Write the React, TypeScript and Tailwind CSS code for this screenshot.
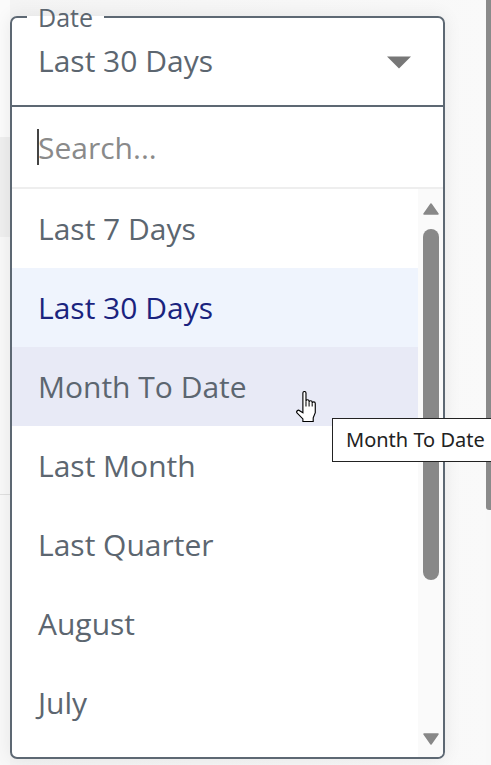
import { FC } from 'react'

const options = ['Last 7 Days', 'Last 30 Days', 'Month To Date', 'Last Month', 'Last Quarter', 'August', 'July']

const Triangle: FC<{ up?: boolean }> = ({ up }) => (
  <svg width="16" height="12" viewBox="0 0 16 12">
    <path
      d={up ? 'M8 1 L15 11 H1 Z' : 'M1 1 H15 L8 11 Z'}
      fill="#888"
      stroke="#888"
      strokeWidth="1.5"
      strokeLinejoin="round"
    />
  </svg>
)

const HandCursor: FC = () => (
  <svg width="23" height="32" viewBox="0 0 22 31" className="absolute left-[295px] top-[391px]">
    <path
      d="M7.5 21 V2 a1.5 1.5 0 0 1 3 0 V10 a1.5 1.5 0 0 1 3 0 V11 a1.5 1.5 0 0 1 3 0 V12 a1.5 1.5 0 0 1 3 0 V21 L17.5 26 V29.5 H7.5 V27 L2 21.5 a1.6 1.6 0 0 1 2.4 -2.3 L7.5 21 Z"
      fill="#fff"
      stroke="#000"
      strokeWidth="1.1"
    />
    <path d="M10.5 10 V15 M13.5 11 V15 M16.5 12 V15" stroke="#000" strokeWidth="1" />
  </svg>
)

export default function App() {
  return (
    <div className="relative h-[765px] w-[491px] overflow-hidden bg-[#f8f8f8] font-['Open_Sans',sans-serif]">
      {/* page behind the open menu */}
      <div className="flex h-full">
        <div className="flex w-[10px] flex-col">
          <div className="h-[137px] bg-[#fbfbfb]" />
          <div className="h-[100px] bg-[#efefef]" />
          <div className="h-[257px]" />
          <div className="h-px bg-[#e0e0e0]" />
        </div>
        <div className="flex-1 bg-gradient-to-r from-[#f4f4f4] to-[#f9f9f9]" />
        <div className="w-[5px]">
          <div className="h-[510px] rounded-bl-[3px] bg-[#8a8a8a]" />
        </div>
      </div>

      {/* select with its menu open */}
      <fieldset className="absolute left-[10px] top-[7px] m-0 w-[435px] rounded-[7px] border-2 border-[#5d6873] bg-white p-0 shadow-[0_0_18px_rgba(0,0,0,0.08)]">
        <legend className="ml-[15px] px-[11px] text-[25px] leading-[20px] text-[#5c6670]">Date</legend>
        <div className="flex h-[78px] items-center justify-between pl-[26px] pr-[32px] pb-[8px]">
          <span className="-mt-[4px] text-[30px] text-[#5c6670]">Last 30 Days</span>
          <svg width="24" height="13" viewBox="0 0 24 13">
            <path d="M0 0.5 H24 L12 12.5 Z" fill="#777" />
          </svg>
        </div>
        <div className="h-[2px] bg-[#5d6873]" />
        <div className="flex h-[80px] items-center pl-[25px]">
          <span className="h-[36px] w-[2px] bg-[#444]" />
          <span className="-ml-px text-[30px] text-[#8a8a8a]">Search...</span>
        </div>
        <div className="h-[2px] bg-[#eeeeee]" />
        <div className="flex h-[568px] overflow-hidden rounded-b-[5px]">
          <div className="flex-1">
            {options.map(o => (
              <div
                key={o}
                className={
                  o === 'Last 30 Days'
                    ? 'flex h-[79px] items-center bg-[#eff4fd] pl-[26px] text-[30px] text-[#1a237e]'
                    : o === 'Month To Date'
                      ? 'flex h-[79px] items-center bg-[#e8eaf6] pl-[26px] text-[30px] text-[#5c6670]'
                      : 'flex h-[79px] items-center pl-[26px] text-[30px] text-[#5c6670]'
                }
              >
                {o}
              </div>
            ))}
          </div>
          <div className="flex w-[25px] flex-col items-center bg-[#fafafa] pt-[14px] pb-[12px]">
            <Triangle up />
            <div className="mt-[14px] h-[351px] w-[16px] rounded-full bg-[#888]" />
            <div className="flex-1" />
            <Triangle />
          </div>
        </div>
      </fieldset>

      <HandCursor />

      <div className="absolute left-[332px] top-[418px] flex h-[44px] w-[170px] items-center border border-[#222] bg-white pl-[13px] font-['Noto_Sans',sans-serif] text-[20px] text-[#222]">
        Month To Date
      </div>
    </div>
  )
}
